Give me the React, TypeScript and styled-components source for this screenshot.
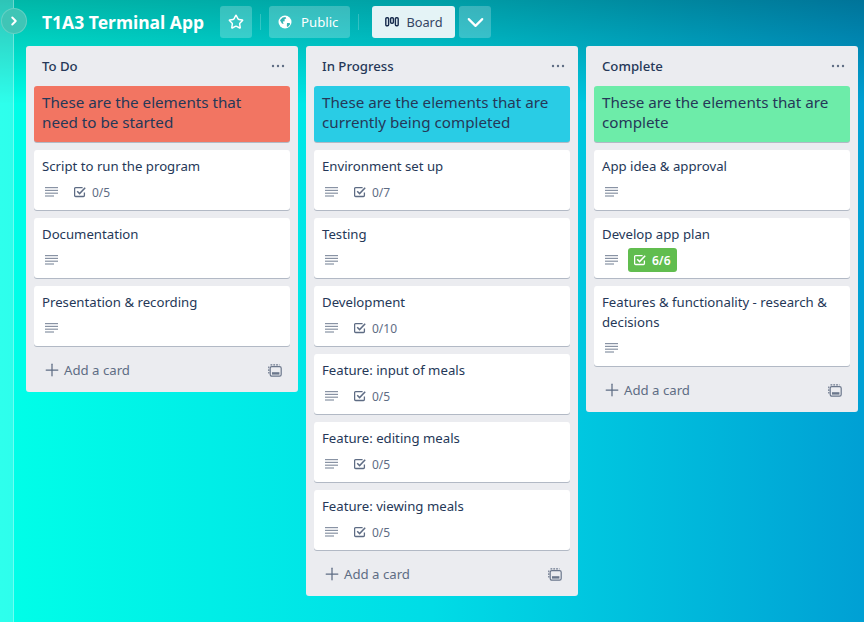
import React from 'react';
import styled, { createGlobalStyle } from 'styled-components';
import { Star, ChevronRight, ChevronDown, Plus } from 'lucide-react';

const GlobalStyle = createGlobalStyle`
  html, body {
    margin: 0;
    height: 100%;
    overflow: hidden;
  }
  body {
    font-family: "Noto Sans", "Open Sans", sans-serif;
    color: #253858;
  }
`;

interface CardData {
  title: string;
  checklist?: string;
  done?: boolean;
}

interface ListData {
  name: string;
  banner: string;
  bannerColor: string;
  cards: CardData[];
}

const lists: ListData[] = [
  {
    name: 'To Do',
    banner: 'These are the elements that need to be started',
    bannerColor: '#f27562',
    cards: [
      { title: 'Script to run the program', checklist: '0/5' },
      { title: 'Documentation' },
      { title: 'Presentation & recording' },
    ],
  },
  {
    name: 'In Progress',
    banner: 'These are the elements that are currently being completed',
    bannerColor: '#29cce5',
    cards: [
      { title: 'Environment set up', checklist: '0/7' },
      { title: 'Testing' },
      { title: 'Development', checklist: '0/10' },
      { title: 'Feature: input of meals', checklist: '0/5' },
      { title: 'Feature: editing meals', checklist: '0/5' },
      { title: 'Feature: viewing meals', checklist: '0/5' },
    ],
  },
  {
    name: 'Complete',
    banner: 'These are the elements that are complete',
    bannerColor: '#6deca9',
    cards: [
      { title: 'App idea & approval' },
      { title: 'Develop app plan', checklist: '6/6', done: true },
      { title: 'Features & functionality - research & decisions' },
    ],
  },
];

const Page = styled.div`
  position: relative;
  width: 864px;
  height: 622px;
  overflow: hidden;
  display: flex;
  background:
    linear-gradient(180deg, rgba(0, 0, 0, 0.28) 0, rgba(0, 0, 0, 0) 104px),
    linear-gradient(90deg, #00ffe8 0%, #00dce6 50%, #00a0d4 100%);
`;

const SideStrip = styled.div`
  width: 13px;
  flex-shrink: 0;
  background: rgba(255, 255, 255, 0.18);
  border-right: 1px solid rgba(255, 255, 255, 0.3);
`;

const SideToggle = styled.button`
  position: absolute;
  left: 1px;
  top: 8px;
  width: 26px;
  height: 26px;
  padding: 0;
  border-radius: 50%;
  border: 1px solid rgba(255, 255, 255, 0.2);
  background: #3fc5b6;
  color: #fff;
  display: flex;
  align-items: center;
  justify-content: center;
`;

const Main = styled.div`
  flex: 1;
  min-width: 0;
  display: flex;
  flex-direction: column;
`;

const BoardBar = styled.div`
  height: 46px;
  padding: 6px 0 2px 28px;
  box-sizing: border-box;
  display: flex;
  align-items: flex-start;
`;

const BoardTitle = styled.h1`
  margin: 0 16px 0 0;
  font-size: 17.5px;
  font-weight: 700;
  line-height: 32px;
  color: #fff;
`;

const BarButton = styled.div<{ $light?: boolean }>`
  height: 32px;
  box-sizing: border-box;
  display: flex;
  align-items: center;
  justify-content: center;
  border-radius: 3px;
  font-size: 13.2px;
  color: ${p => (p.$light ? '#344563' : '#fff')};
  background: ${p => (p.$light ? '#e4f3f6' : 'rgba(255, 255, 255, 0.22)')};
`;

const PublicButton = styled(BarButton)`
  gap: 9px;
  padding: 0 12px 0 9px;
`;

const ViewButton = styled(BarButton)`
  gap: 7px;
  width: 83px;
  font-size: 12.8px;
`;

const IconButton = styled(BarButton)`
  width: 32px;
`;

const BarDivider = styled.span`
  width: 1px;
  height: 16px;
  margin: 8px 8px 0;
  background: rgba(255, 255, 255, 0.2);
`;

const ViewGroup = styled.div`
  display: flex;
  gap: 4px;
  margin-left: 5px;
`;

const Columns = styled.div`
  display: flex;
  align-items: flex-start;
  gap: 8px;
  padding-left: 12px;
`;

const Column = styled.section`
  width: 272px;
  flex-shrink: 0;
  box-sizing: border-box;
  padding: 0 8px;
  background: #ebecf0;
  border-radius: 3px;
`;

const ColumnHeader = styled.header`
  height: 40px;
  box-sizing: border-box;
  padding: 0 4px 1px 8px;
  display: flex;
  align-items: center;
  justify-content: space-between;
`;

const ColumnName = styled.h2`
  margin: 0;
  font-size: 13.2px;
  font-weight: 500;
  color: #253858;
`;

const CardStack = styled.div`
  display: flex;
  flex-direction: column;
  gap: 8px;
`;

const Banner = styled.div<{ $color: string }>`
  height: 56px;
  box-sizing: border-box;
  padding: 6px 14px 6px 8px;
  border-radius: 3px;
  font-size: 15.2px;
  line-height: 20px;
  color: #253858;
  background: ${p => p.$color};
  box-shadow: 0 1px 0 #091e4240;
`;

const Card = styled.article`
  box-sizing: border-box;
  padding: 6px 8px 2px;
  background: #fff;
  border-radius: 3px;
  box-shadow: 0 1px 0 #091e4240;
`;

const CardTitle = styled.div`
  font-size: 13.2px;
  line-height: 20px;
  color: #253858;
  margin-bottom: 4px;
`;

const BadgeRow = styled.div`
  height: 24px;
  margin-bottom: 4px;
  display: flex;
  align-items: center;
  color: #8993a4;
`;

const DescIcon = styled.span`
  width: 17px;
  height: 20px;
  padding-left: 3px;
  margin-right: 6px;
  display: flex;
  align-items: center;
`;

const Checklist = styled.span<{ $done?: boolean }>`
  height: 24px;
  box-sizing: border-box;
  display: flex;
  align-items: center;
  gap: 6px;
  padding: 0 6px;
  border-radius: 3px;
  font-size: 12px;
  font-weight: ${p => (p.$done ? 600 : 400)};
  color: ${p => (p.$done ? '#fff' : '#5e6c84')};
  background: ${p => (p.$done ? '#61bd4f' : 'transparent')};
`;

const ColumnFooter = styled.footer`
  height: 42px;
  box-sizing: border-box;
  margin-top: 4px;
  padding: 0 8px 2px 8px;
  display: flex;
  align-items: center;
  justify-content: space-between;
  color: #5e6c84;
`;

const AddCard = styled.span`
  display: flex;
  align-items: center;
  gap: 2px;
  font-size: 13.2px;
`;

const DotsIcon = () => (
  <svg width="16" height="16" viewBox="0 0 16 16" fill="#5e6c84">
    <circle cx="3" cy="8" r="1.2" />
    <circle cx="8" cy="8" r="1.2" />
    <circle cx="13" cy="8" r="1.2" />
  </svg>
);

const GlobeIcon = () => (
  <svg width="14" height="14" viewBox="0 0 14 14">
    <circle cx="7" cy="7" r="6.5" fill="#fff" />
    <path
      d="M2 5.2 4.6 2.6 7.4 1.9 8.3 3.3 6.4 4.6 6.8 6.2 4.8 6.6 5.6 9 3.9 8.4ZM9 8h2.6l.6 1.2-2.4 2.7-1-.6Z"
      fill="#35b5b5"
    />
  </svg>
);

const BoardIcon = () => (
  <svg width="14" height="10" viewBox="0 0 14 10" fill="none" stroke="#172b4d" strokeWidth="1.4">
    <rect x="0.8" y="0.8" width="2.8" height="8" rx="1" />
    <rect x="5.6" y="0.8" width="2.8" height="5.5" rx="1" />
    <rect x="10.4" y="0.8" width="2.8" height="8" rx="1" />
  </svg>
);

const LinesIcon = () => (
  <svg width="14" height="12" viewBox="0 0 14 12" fill="currentColor">
    <rect x="0" y="1" width="13" height="1.2" />
    <rect x="0" y="3.8" width="13" height="1.2" />
    <rect x="0" y="6.6" width="13" height="1.2" />
    <rect x="0" y="9.4" width="9" height="1.2" />
  </svg>
);

const CheckIcon = () => (
  <svg width="12" height="12" viewBox="0 0 12 12" fill="none" stroke="currentColor" strokeWidth="1.3">
    <path d="M10.4 6.5v3a1 1 0 0 1-1 1H1.6a1 1 0 0 1-1-1V2.6a1 1 0 0 1 1-1h7" />
    <path d="M3.2 5.2 5.6 7.6 11.2 1.8" strokeWidth="1.5" />
  </svg>
);

const TemplateIcon = () => (
  <svg width="14" height="13" viewBox="0 0 14 13" fill="none" stroke="#6b778c" strokeWidth="1.2">
    <path d="M2.5 0.8h9M0.8 2.5v7" strokeDasharray="1.8 1" />
    <rect x="2.2" y="2.6" width="11" height="9.6" rx="1.6" />
    <rect x="4" y="8.2" width="7.4" height="2.4" fill="#6b778c" stroke="none" />
  </svg>
);

const App: React.FC = () => {
  return (
    <Page>
      <GlobalStyle />
      <SideStrip />
      <SideToggle>
        <ChevronRight size={14} strokeWidth={3.4} />
      </SideToggle>
      <Main>
        <BoardBar>
          <BoardTitle>T1A3 Terminal App</BoardTitle>
          <IconButton>
            <Star size={16} strokeWidth={2.2} />
          </IconButton>
          <BarDivider />
          <PublicButton>
            <GlobeIcon />
            Public
          </PublicButton>
          <BarDivider />
          <ViewGroup>
            <ViewButton $light>
              <BoardIcon />
              Board
            </ViewButton>
            <IconButton>
              <ChevronDown size={27} strokeWidth={1.9} />
            </IconButton>
          </ViewGroup>
        </BoardBar>
        <Columns>
          {lists.map(list => (
            <Column key={list.name}>
              <ColumnHeader>
                <ColumnName>{list.name}</ColumnName>
                <DotsIcon />
              </ColumnHeader>
              <CardStack>
                <Banner $color={list.bannerColor}>{list.banner}</Banner>
                {list.cards.map(card => (
                  <Card key={card.title}>
                    <CardTitle>{card.title}</CardTitle>
                    <BadgeRow>
                      <DescIcon>
                        <LinesIcon />
                      </DescIcon>
                      {card.checklist && (
                        <Checklist $done={card.done}>
                          <CheckIcon />
                          {card.checklist}
                        </Checklist>
                      )}
                    </BadgeRow>
                  </Card>
                ))}
              </CardStack>
              <ColumnFooter>
                <AddCard>
                  <Plus size={20} strokeWidth={1.5} />
                  Add a card
                </AddCard>
                <TemplateIcon />
              </ColumnFooter>
            </Column>
          ))}
        </Columns>
      </Main>
    </Page>
  );
};

export default App;
